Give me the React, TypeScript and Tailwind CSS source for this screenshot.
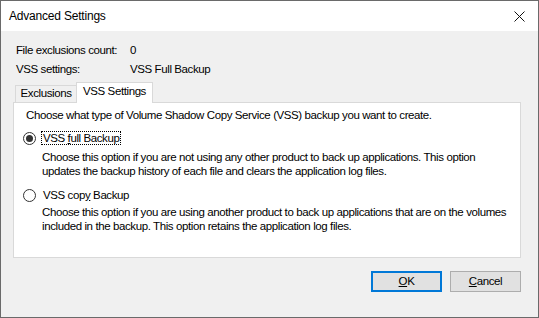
import React from "react";

const font = { fontFamily: '"Liberation Sans", Arial, sans-serif', letterSpacing: "-0.4px" };

function Radio({ checked }: { checked: boolean }) {
  return (
    <span className="flex h-[13px] w-[13px] shrink-0 items-center justify-center rounded-full border border-[#333333] bg-white">
      {checked && <span className="block h-[7px] w-[7px] rounded-full bg-[#333333]" />}
    </span>
  );
}

export default function App() {
  return (
    <div
      className="flex h-[318px] w-[539px] flex-col overflow-hidden whitespace-nowrap border border-[#6a6a6a] bg-[#f0f0f0] text-[11.5px] text-black"
      style={font}
    >
      {/* Title bar */}
      <div className="flex h-[30px] shrink-0 items-center justify-between bg-white pl-[8px] pr-[13px]">
        <span className="text-[12px] leading-none tracking-[-0.2px]">Advanced Settings</span>
        <svg width="11" height="11" viewBox="0 0 11 11" className="block">
          <path d="M0.5 0.5 L10.5 10.5 M10.5 0.5 L0.5 10.5" stroke="#111" strokeWidth="1" />
        </svg>
      </div>

      {/* Body */}
      <div className="flex flex-1 flex-col pl-[12px] pr-[17px] pt-[10px]">
        <div className="flex flex-col pl-[3px] leading-[19px]">
          <div className="flex">
            <span className="w-[114px]">File exclusions count:</span>
            <span>0</span>
          </div>
          <div className="flex">
            <span className="w-[114px]">VSS settings:</span>
            <span>VSS Full Backup</span>
          </div>
        </div>

        {/* Tabs */}
        <div className="relative z-10 mt-[3px] flex h-[20px] items-end pl-[2px]">
          <div className="flex h-[17px] w-[62px] items-center justify-center border border-b-0 border-[#d9d9d9] bg-[#f0f0f0] leading-none">
            Exclusions
          </div>
          <div className="-mb-[1px] -ml-[1px] flex h-[21px] w-[77px] items-center justify-center border border-b-0 border-[#d9d9d9] bg-white pb-[2px] leading-none">
            VSS Settings
          </div>
        </div>

        {/* Panel */}
        <div className="flex h-[156px] flex-col border border-[#d9d9d9] bg-white pl-[12px] pt-[4px]">
          <div className="leading-[17px]">
            Choose what type of Volume Shadow Copy Service (VSS) backup you want to create.
          </div>

          <div className="mt-[7px] flex items-center gap-[5px]" style={{ marginLeft: -3 }}>
            <Radio checked />
            <span className="border border-dotted border-black px-[1px] leading-[12px]">
              VSS <u>f</u>ull Backup
            </span>
          </div>
          <div className="mt-[5px] pl-[16px] leading-[14px]">
            Choose this option if you are not using any other product to back up applications. This option
            <br />
            updates the backup history of each file and clears the application log files.
          </div>

          <div className="mt-[10px] flex items-center gap-[7px]" style={{ marginLeft: -3 }}>
            <Radio checked={false} />
            <span className="leading-[14px]">
              VSS cop<u>y</u> Backup
            </span>
          </div>
          <div className="mt-[3px] pl-[16px] leading-[14px]">
            Choose this option if you are using another product to back up applications that are on the volumes
            <br />
            included in the backup. This option retains the application log files.
          </div>
        </div>

        {/* Buttons */}
        <div className="mt-[13px] flex justify-end gap-[8px]">
          <button className="flex h-[21px] w-[71px] items-center justify-center border-2 border-[#0078d7] bg-[#e1e1e1] leading-none">
            <span>
              <u>O</u>K
            </span>
          </button>
          <button className="flex h-[21px] w-[71px] items-center justify-center border border-[#adadad] bg-[#e1e1e1] leading-none">
            <span>
              <u>C</u>ancel
            </span>
          </button>
        </div>
      </div>
    </div>
  );
}
